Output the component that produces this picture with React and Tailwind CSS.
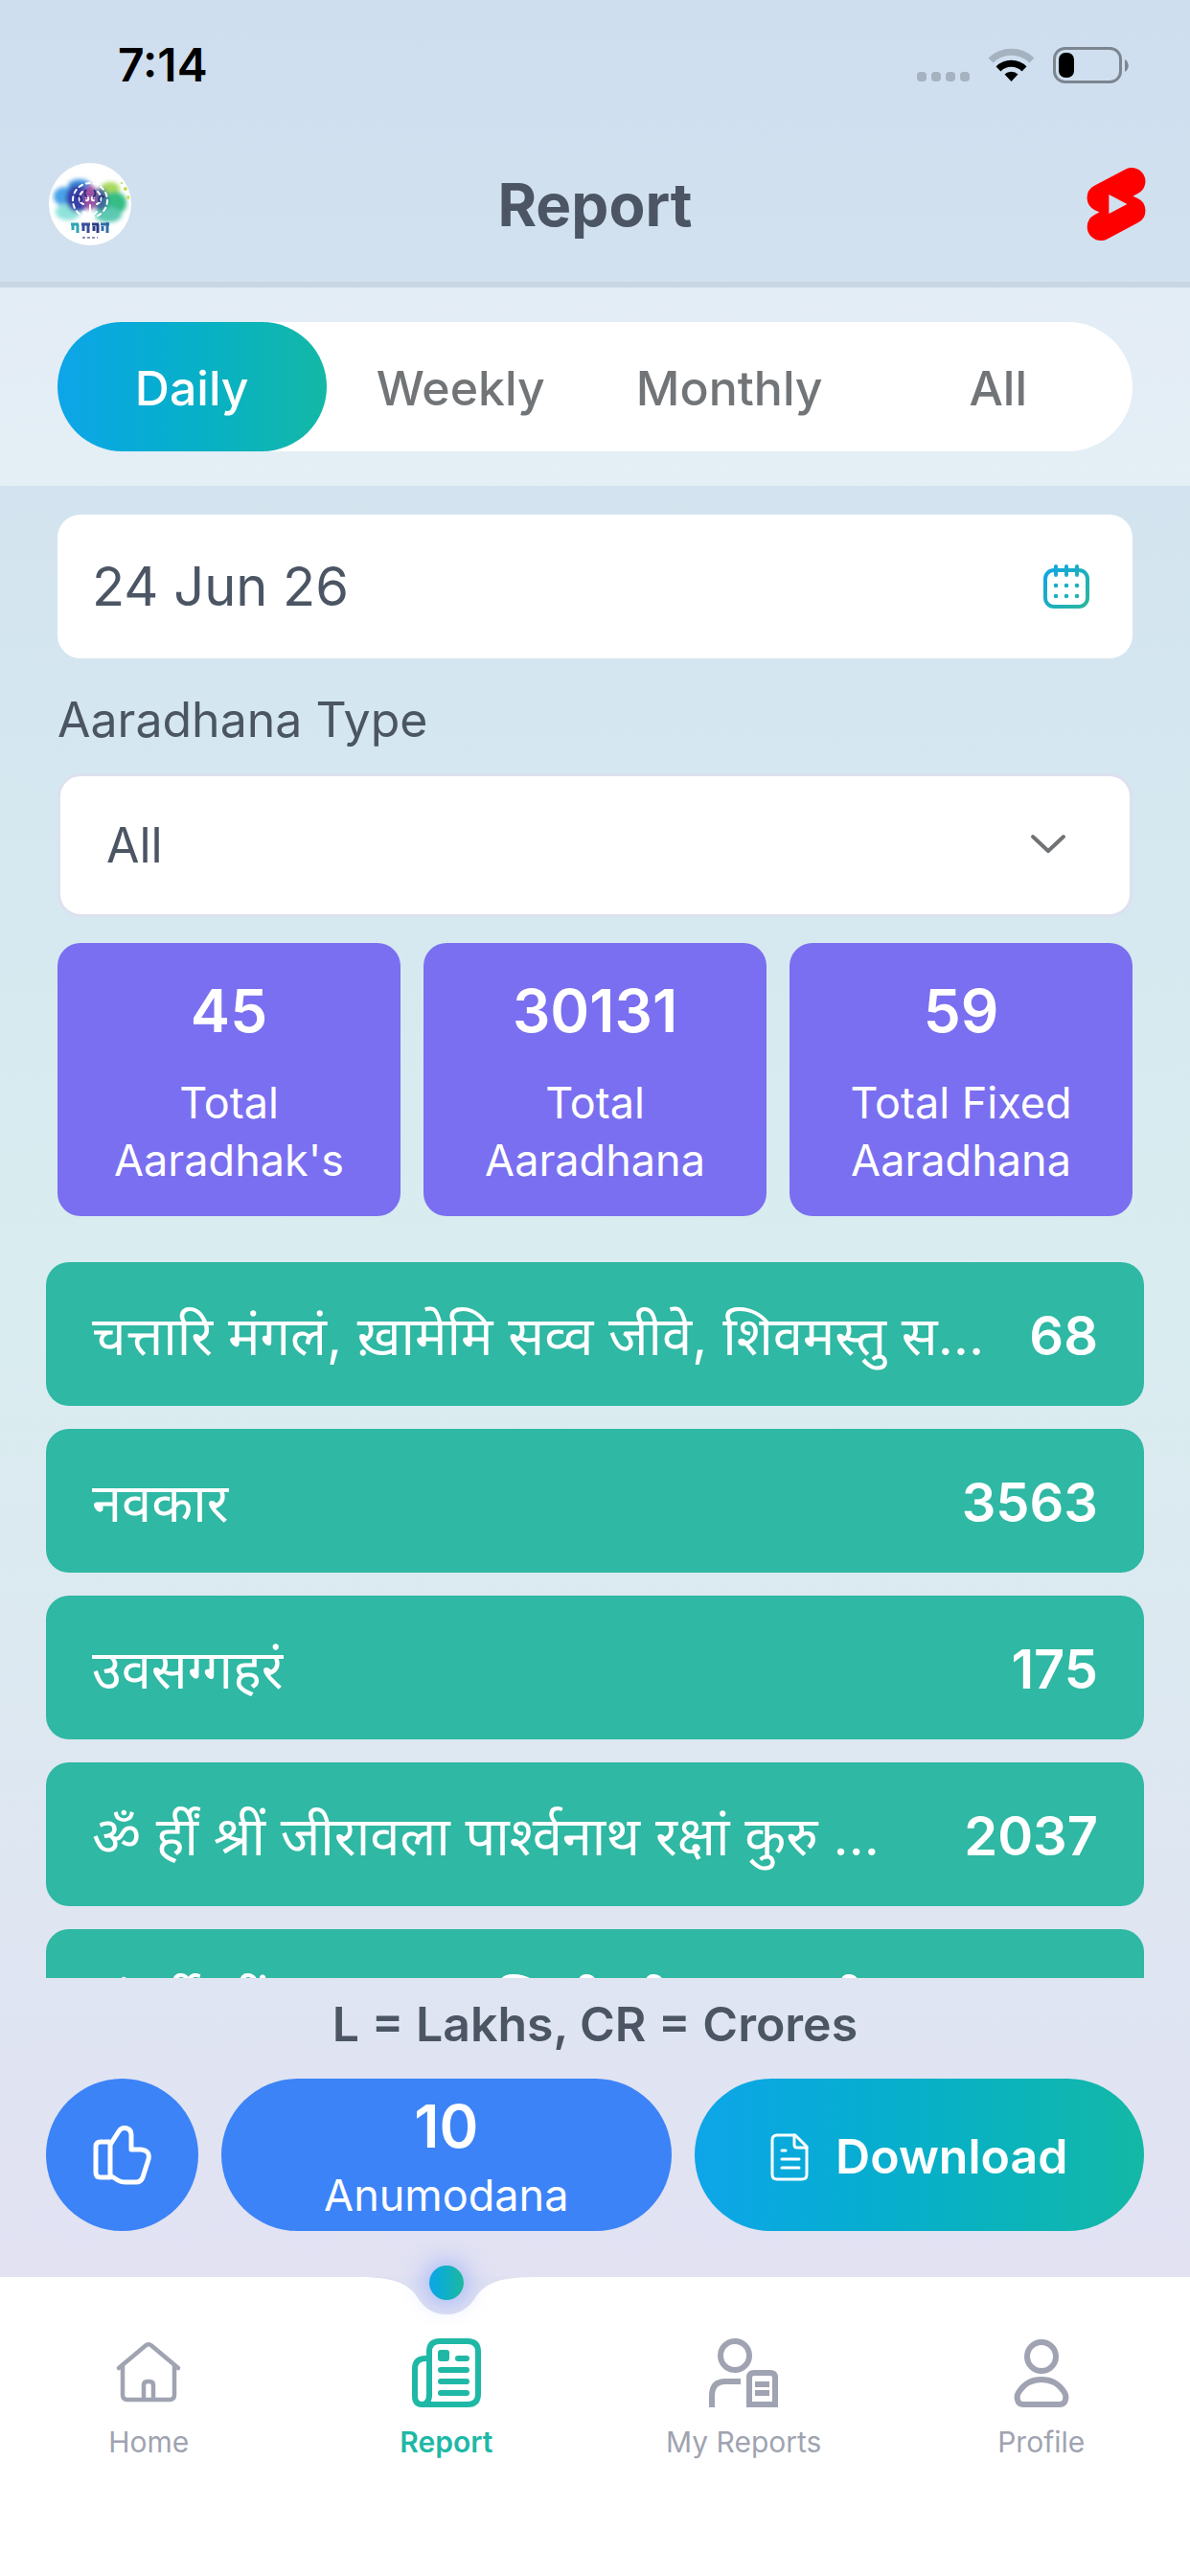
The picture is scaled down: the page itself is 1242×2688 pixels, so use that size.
import { useState } from 'react';
import { SiYoutubeshorts } from 'react-icons/si';

const tabs = ['Daily', 'Weekly', 'Monthly', 'All'];

const stats = [
  { value: '45', label: "Total Aaradhak's" },
  { value: '30131', label: 'Total Aaradhana' },
  { value: '59', label: 'Total Fixed Aaradhana' },
];

const aaradhanas = [
  { name: 'चत्तारि मंगलं, ख़ामेमि सव्व जीवे, शिवमस्तु स…', count: '68' },
  { name: 'नवकार', count: '3563' },
  { name: 'उवसग्गहरं', count: '175' },
  { name: 'ॐ र्हीं श्रीं जीरावला पार्श्वनाथ रक्षां कुरु …', count: '2037' },
  { name: 'ॐ र्हीं श्रीं नमः सकल सिद्धी श्री फल दायी नमः', count: '' },
];

function StatusBar() {
  return (
    <div className="flex h-[136px] shrink-0 items-center justify-between pl-[123px] pr-[64px]">
      <span className="text-[48px] font-semibold text-black">7:14</span>
      <svg className="h-[38px] w-[221px]" viewBox="0 0 221 38" fill="none">
        {[0, 15, 30, 45].map((x) => (
          <rect key={x} x={x} y="26" width="10" height="10" rx="4" fill="#a5b2bf" />
        ))}
        <path d="M77 14a31 31 0 0 1 43 0" stroke="#a5b2bf" strokeWidth="7" />
        <path d="M85 23a19 19 0 0 1 27 0" stroke="#000" strokeWidth="7" />
        <path d="M98.500 36l-7-7.500a10 10 0 0 1 14 0z" fill="#000" />
        <rect x="143.500" y="1.500" width="69" height="35" rx="11" stroke="#7c8690" strokeWidth="3" />
        <rect x="148" y="6" width="16" height="26" rx="7" fill="#000" />
        <path d="M217 13c5 3 5 10 0 13z" fill="#7c8690" />
      </svg>
    </div>
  );
}

function Logo() {
  return (
    <svg className="h-[86px] w-[86px]" viewBox="0 0 86 86">
      <defs>
        <filter id="wash" x="-20%" y="-20%" width="140%" height="140%">
          <feGaussianBlur stdDeviation="2" />
        </filter>
        <clipPath id="disc">
          <circle cx="43" cy="43" r="42" />
        </clipPath>
      </defs>
      <circle cx="43" cy="43" r="43" fill="#fff" />
      <g clipPath="url(#disc)">
        <g filter="url(#wash)">
          <ellipse cx="16" cy="35" rx="11" ry="10" fill="#4aa3e8" />
          <ellipse cx="32" cy="24" rx="12" ry="7" fill="#3f8fdf" />
          <ellipse cx="20" cy="51" rx="13" ry="9" fill="#8fe3dc" />
          <ellipse cx="64" cy="27" rx="10" ry="7" fill="#a7d95b" />
          <ellipse cx="69" cy="42" rx="12" ry="12" fill="#35bd84" />
          <ellipse cx="62" cy="54" rx="14" ry="8" fill="#5cc9b2" />
          <ellipse cx="30" cy="37" rx="12" ry="14" fill="#3440a8" />
          <ellipse cx="54" cy="38" rx="8" ry="12" fill="#3f6a9c" />
          <ellipse cx="43" cy="36" rx="7" ry="13" fill="#a04fa5" />
        </g>
        <circle cx="80" cy="27" r="2" fill="#bfdc4c" />
        <circle cx="76" cy="21" r="1" fill="#a7d95b" />
        <circle cx="83" cy="36" r="2" fill="#c9e25a" />
        <g fill="none" stroke="#fff" strokeWidth="2" strokeLinecap="round">
          <circle cx="43" cy="39" r="18" strokeDasharray="4 4" />
          <path d="M35 30c-5 5-4 11 1 13M51 30c5 5 4 11-1 13M39 36c3-3 3 5 0 3M47 36c-3-3-3 5 0 3M43 44v9M36 51c4 5 10 5 14 0" />
        </g>
        <g fill="none" stroke="#2b2f7d" strokeWidth="2">
          <path d="M28 36c4-4 7 0 5 5M58 36c-4-4-7 0-5 5M39 28c-3 4-1 6 1 8M47 28c3 4 1 6-1 8" />
        </g>
        <g fill="none" strokeWidth="3">
          <path d="M23 64h8M25 64v6M30 64v9" stroke="#2fa6b4" />
          <path d="M34 64h9M36 65v6M41 64v9" stroke="#3b4d9b" />
          <path d="M45 64h7M47 66v5M51 64v9" stroke="#2c3c86" />
          <path d="M54 64h9M56 66v5M61 62v11" stroke="#2e6fa8" />
        </g>
        <path d="M35 78h16" stroke="#8d93b5" strokeWidth="2" strokeDasharray="3 2" />
      </g>
    </svg>
  );
}

function CalendarIcon() {
  return (
    <svg className="h-[46px] w-[48px]" viewBox="0 0 48 46" fill="none">
      <defs>
        <linearGradient id="cal" x1="0" y1="0" x2="48" y2="46" gradientUnits="userSpaceOnUse">
          <stop stopColor="#0ea5e9" />
          <stop offset="1" stopColor="#2bb79a" />
        </linearGradient>
      </defs>
      <rect x="2" y="6" width="44" height="38" rx="9" stroke="url(#cal)" strokeWidth="4" />
      <path d="M13 2v9M24 2v9M35 2v9" stroke="url(#cal)" strokeWidth="4" strokeLinecap="round" />
      <g fill="url(#cal)">
        {[13, 24, 35].map((x) => (
          <g key={x}>
            <circle cx={x} cy="22" r="2.300" />
            <circle cx={x} cy="33" r="2.300" />
          </g>
        ))}
      </g>
    </svg>
  );
}

function HomeIcon() {
  return (
    <svg className="h-[72px] w-[72px]" viewBox="0 0 72 72" fill="none" stroke="currentColor" strokeWidth="4.500" strokeLinecap="round" strokeLinejoin="round">
      <path d="M5 31L33 7.500q3-2.500 6 0L67 31" />
      <path d="M9 29v30q0 5 5 5h44q5 0 5-5V29" />
      <path d="M31 63V49q0-4 4-4h2q4 0 4 4v14" />
    </svg>
  );
}

function ReportIcon() {
  return (
    <svg className="h-[72px] w-[72px]" viewBox="0 0 72 72" fill="none" stroke="currentColor" strokeLinecap="round">
      <path d="M18 60V14Q18 3 29 3H58Q69 3 69 14V58Q69 69 58 69H10.500Q3 69 3 60V32Q3 21 14 21H17" strokeWidth="6" />
      <path d="M18 58Q18 69 10.500 69" strokeWidth="6" />
      <rect x="27" y="12" width="12" height="12" rx="3" fill="currentColor" stroke="none" />
      <path d="M48 21H57M30 33H57M30 45H57M30 57H57" strokeWidth="6" />
    </svg>
  );
}

function MyReportsIcon() {
  return (
    <svg className="h-[72px] w-[72px]" viewBox="0 0 72 72" fill="none" stroke="currentColor" strokeWidth="6">
      <circle cx="27" cy="18" r="15" />
      <path d="M3 72V60Q3 45 17 45H33" />
      <path d="M42 69V41Q42 36 47 36H64Q69 36 69 41V69Z" />
      <path d="M48 48H63M48 57H63" />
    </svg>
  );
}

function ProfileIcon() {
  return (
    <svg className="h-[72px] w-[72px]" viewBox="0 0 72 72" fill="none" stroke="currentColor" strokeWidth="6">
      <circle cx="36" cy="19" r="15" />
      <path d="M17 69C10 69 9 60 13 55C24 39 48 39 59 55C63 60 62 69 55 69Z" />
    </svg>
  );
}

function ThumbIcon() {
  return (
    <svg className="h-[62px] w-[62px]" viewBox="0 0 62 62" fill="none" stroke="#fff" strokeWidth="5" strokeLinejoin="round">
      <path d="M18 18V54H8Q3 54 3 49V22Q3 17 8 17H18" />
      <path d="M18 20L27 6C31 0 40 2 40 10V25H50Q60 26 58 35L52 54Q50 59 45 59H33Q29 59 26 57L18 52" />
    </svg>
  );
}

function FileIcon() {
  return (
    <svg className="h-[50px] w-[40px]" viewBox="0 0 40 50" fill="none" stroke="#fff" strokeWidth="3" strokeLinecap="round" strokeLinejoin="round">
      <path d="M26 2H7Q2 2 2 7V43Q2 48 7 48H33Q38 48 38 43V14Z" />
      <path d="M25 2V12Q25 15 28 15H38M12 18H16M12 27H30M12 36H30" />
    </svg>
  );
}

const navItems = [
  { label: 'Home', icon: HomeIcon },
  { label: 'Report', icon: ReportIcon },
  { label: 'My Reports', icon: MyReportsIcon },
  { label: 'Profile', icon: ProfileIcon },
];

function BottomNav({ active }) {
  return (
    <nav className="grid shrink-0 grid-cols-4 bg-white pb-[120px] pt-[64px]">
      {navItems.map(({ label, icon: Icon }) => (
        <a
          key={label}
          href="#"
          className={`relative flex flex-col items-center gap-4 text-[30px] leading-10 ${
            active === label ? 'font-semibold text-[#1fb8a6]' : 'text-[#a0a3b1]'
          }`}
        >
          {active === label && (
            // notch cut into the top edge of the bar with its glowing dot
            <span className="absolute -top-16 flex h-10 w-[186px] justify-center">
              <svg className="h-10 w-[186px]" viewBox="0 0 186 40">
                <path d="M0 0C36 0 52 6 62 20C69 32 79 39 93 39S117 32 124 20C134 6 150 0 186 0Z" fill="#dee0f2" />
              </svg>
              <span className="absolute -top-3 h-9 w-9 rounded-full bg-linear-to-r from-[#0ea5e9] to-[#1fb89f] shadow-[0_0_24px_4px_rgba(80,120,255,0.4)]" />
            </span>
          )}
          <Icon />
          {label}
        </a>
      ))}
    </nav>
  );
}

export default function App() {
  const [tab, setTab] = useState('Daily');

  return (
    <div className="flex h-screen flex-col bg-linear-to-b from-[#cfdeef] from-0% via-[#d9edf0] via-50% to-[#e2e1f3] to-90% font-['Inter','Noto_Sans',sans-serif] text-[#4b5563]">
      <StatusBar />

      <header className="grid h-[164px] shrink-0 grid-cols-3 items-center border-b-[6px] border-[#c8d6e4] px-[39px] pb-1">
        <div className="pl-3">
          <Logo />
        </div>
        <h1 className="text-center text-[62px] font-bold">Report</h1>
        <button aria-label="Shorts" className="justify-self-end text-[76px] text-[#ff0000]">
          <SiYoutubeshorts />
        </button>
      </header>

      {/* Period tabs */}
      <div className="shrink-0 bg-white/40 px-[60px] py-[36px]">
        <div className="grid grid-cols-4 rounded-full bg-white">
          {tabs.map((name) => (
            <button
              key={name}
              onClick={() => setTab(name)}
              className={`h-[135px] rounded-full pt-1 text-[50px] font-medium ${
                tab === name ? 'bg-linear-to-r from-[#0ea5e9] to-[#14b8a6] text-white' : 'text-[#717578]'
              }`}
            >
              {name}
            </button>
          ))}
        </div>
      </div>

      {/* Filters */}
      <div className="flex shrink-0 flex-col px-[60px] pt-[30px]">
        <div className="flex h-[150px] items-center rounded-3xl bg-white pl-[36px] pr-[45px]">
          <input aria-label="Date" defaultValue="24 Jun 26" className="min-w-0 flex-1 bg-transparent text-[56px] outline-none" />
          <button aria-label="Pick a date">
            <CalendarIcon />
          </button>
        </div>
        <label htmlFor="type" className="mt-[28px] text-[50px] leading-[72px]">
          Aaradhana Type
        </label>
        <div className="relative mt-[20px]">
          <select id="type" className="h-[150px] w-full appearance-none rounded-3xl border-[3px] border-[#dde0ee] bg-white px-[48px] text-[50px] outline-none">
            <option>All</option>
          </select>
          <svg className="pointer-events-none absolute right-[68px] top-[62px] h-6 w-10" viewBox="0 0 40 24" fill="none">
            <path d="M4 4L20 19L36 4" stroke="#6f7375" strokeWidth="4" strokeLinecap="round" strokeLinejoin="round" />
          </svg>
        </div>
      </div>

      {/* Totals */}
      <div className="grid shrink-0 grid-cols-3 gap-6 px-[60px] pt-[27px]">
        {stats.map((s) => (
          <div key={s.label} className="flex h-[285px] flex-col items-center rounded-3xl bg-[#7a6ff0] px-[40px] pt-[33px] text-center text-white">
            <span className="text-[62px] leading-[76px] font-semibold">{s.value}</span>
            <span className="mt-[28px] text-[45px] leading-[60px]">{s.label}</span>
          </div>
        ))}
      </div>

      {/* Aaradhana counts */}
      <ul className="mt-[48px] flex min-h-0 flex-1 flex-col gap-6 overflow-hidden px-[48px]">
        {aaradhanas.map((a) => (
          <li key={a.name} className="flex h-[150px] shrink-0 items-center justify-between gap-8 rounded-3xl bg-[#2fb8a3] px-[48px] pt-1 text-[56px] text-white">
            <span className="truncate leading-[96px]">{a.name}</span>
            <span className="font-semibold">{a.count}</span>
          </li>
        ))}
      </ul>

      <p className="shrink-0 pt-[12px] text-center text-[50px] leading-[72px] font-semibold">L = Lakhs, CR = Crores</p>

      <div className="flex shrink-0 gap-6 px-[48px] pb-[48px] pt-[21px] text-white">
        <button aria-label="Like" className="flex h-[159px] w-[159px] items-center justify-center rounded-full bg-[#3c83f7]">
          <ThumbIcon />
        </button>
        <button className="flex h-[159px] flex-1 flex-col items-center justify-center rounded-full bg-[#3c83f7] pt-2">
          <span className="text-[62px] leading-[76px] font-semibold">10</span>
          <span className="text-[45px] leading-[68px]">Anumodana</span>
        </button>
        <button className="flex h-[159px] flex-1 items-center justify-center gap-7 rounded-full bg-linear-to-r from-[#0ea5e9] to-[#14b8a6] pt-1 text-[50px] font-semibold">
          <FileIcon />
          Download
        </button>
      </div>

      <BottomNav active="Report" />
    </div>
  );
}
